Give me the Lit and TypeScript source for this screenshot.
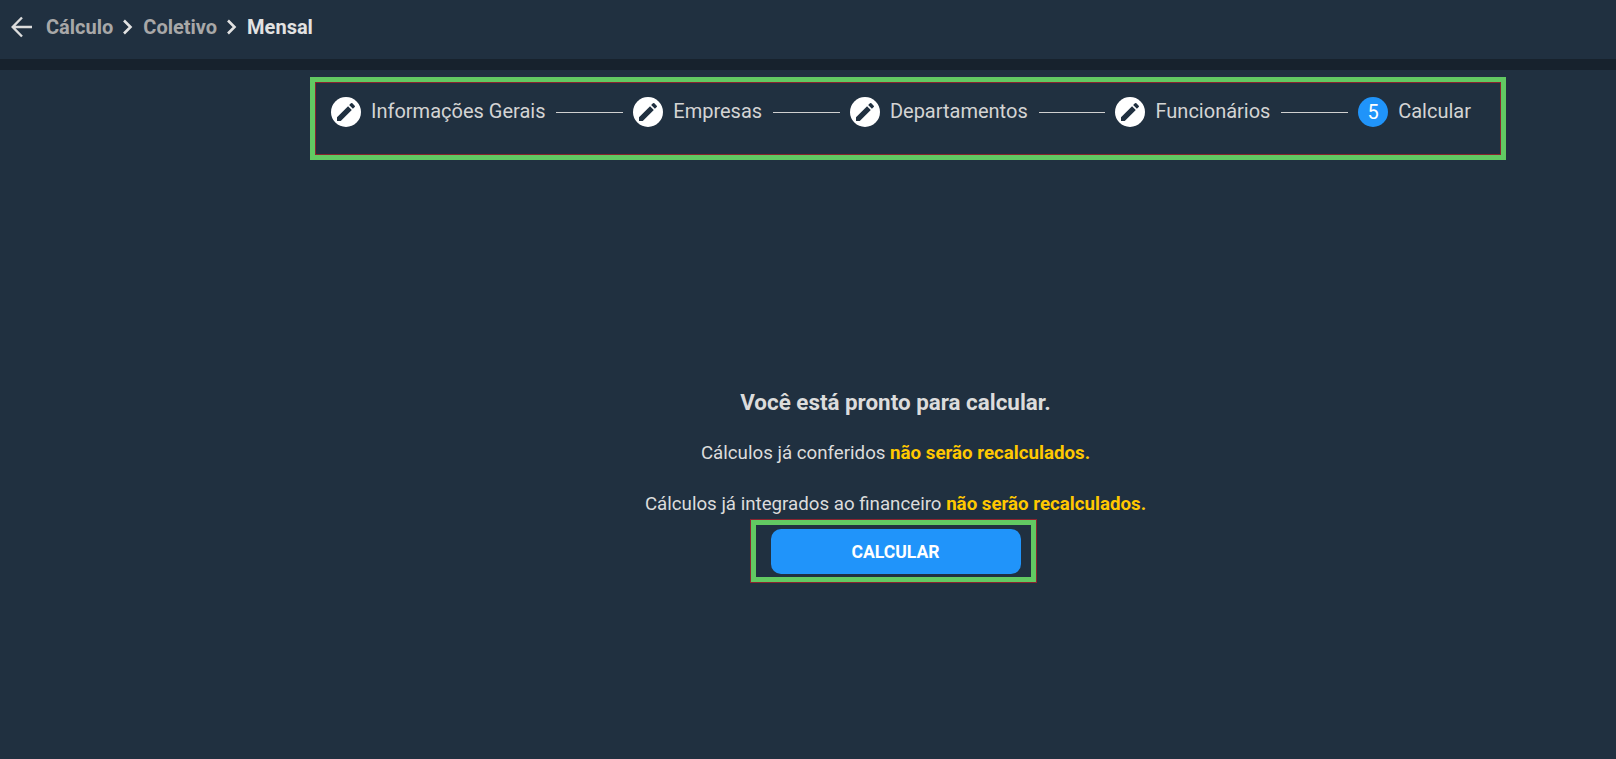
import { LitElement, html, css, svg } from "lit";
import { customElement } from "lit/decorators.js";

const pencil = svg`<path d="M3 17.25V21h3.75L17.81 9.94l-3.75-3.75L3 17.25zM20.71 7.04a1 1 0 0 0 0-1.41l-2.34-2.34a1 1 0 0 0-1.41 0l-1.83 1.83 3.75 3.75 1.83-1.83z"/>`;

@customElement("app-root")
export class AppRoot extends LitElement {
  static styles = css`
    :host { display: block; height: 759px; background: #203040; color: #dcdcdc; font-family: Roboto, "Liberation Sans", sans-serif; overflow: hidden; }
    .header { height: 59px; display: flex; align-items: center; padding: 0 0 5px 11px; box-sizing: border-box; font-size: 20px; font-weight: 700; }
    .back { width: 21px; height: 22px; margin-right: 14px; fill: none; stroke: #dcdcdc; stroke-width: 2.4; }
    .crumb { color: #a8a8a8; }
    .crumb.current { color: #e2e2e2; }
    .chev { width: 12px; height: 16px; margin: 0 9px; fill: none; stroke: #e2e2e2; stroke-width: 2.6; }
    .strip { height: 11px; background: #17222d; }
    .stepper-wrap { padding: 7px 110px 0 310px; }
    .stepper { height: 83px; box-sizing: border-box; border: 5px solid #62c962; outline: 1px solid #8a2430; outline-offset: -6px; padding: 15px 30px 0 16px; display: flex; align-items: flex-start; font-size: 20px; color: #d4d4d4; }
    .step { display: flex; align-items: center; height: 30px; line-height: 28px; }
    .label { margin-top: -3px; }
    .icon { width: 30px; height: 30px; border-radius: 50%; background: #fff; display: flex; align-items: center; justify-content: center; margin-right: 10px; flex: none; }
    .icon svg { width: 24px; height: 24px; fill: #203040; }
    .icon.num { background: #2094fa; color: #fff; font-size: 20px; }
    .line { flex: 1; height: 1px; background: #d0d0d0; margin: 15px 10px 0 11px; }
    .main { display: flex; flex-direction: column; align-items: center; margin-top: 229px; padding-left: 175px; font-size: 18.72px; }
    h1 { margin: 0; font-size: 22.4px; font-weight: 700; line-height: 26px; color: #dcdcdc; }
    p { margin: 0; line-height: 22px; color: #dcdcdc; }
    .p1 { margin-top: 27px; }
    .p2 { margin-top: 29px; }
    b { color: #ffc800; font-weight: 700; }
    .btn-box { margin: 5px 4px 0 0; width: 285px; height: 62px; box-sizing: border-box; border: 5px solid #62c962; outline: 1px solid #8a2430; display: flex; align-items: center; justify-content: center; }
    button { width: 250px; height: 45px; margin-left: 4px; padding: 1px 0 0; border: 0; border-radius: 10px; background: #2094fa; color: #fff; font: 700 17.6px Roboto, "Liberation Sans", sans-serif; }
  `;

  render() {
    const steps = ["Informações Gerais", "Empresas", "Departamentos", "Funcionários"];
    return html`
      <div class="header">
        <svg class="back" viewBox="0 0 21 22"><path d="M21 11H2M11 1.5 1.7 11l9.3 9.5"/></svg>
        <span class="crumb">Cálculo</span>
        <svg class="chev" viewBox="0 0 12 16"><path d="M2 1.5l6.5 6.5L2 14.5"/></svg>
        <span class="crumb">Coletivo</span>
        <svg class="chev" viewBox="0 0 12 16"><path d="M2 1.5l6.5 6.5L2 14.5"/></svg>
        <span class="crumb current">Mensal</span>
      </div>
      <div class="strip"></div>
      <div class="stepper-wrap">
        <div class="stepper">
          ${steps.map(s => html`
            <div class="step"><span class="icon"><svg viewBox="0 0 24 24">${pencil}</svg></span><span class="label">${s}</span></div>
            <div class="line"></div>`)}
          <div class="step"><span class="icon num">5</span><span class="label">Calcular</span></div>
        </div>
      </div>
      <div class="main">
        <h1>Você está pronto para calcular.</h1>
        <p class="p1">Cálculos já conferidos <b>não serão recalculados.</b></p>
        <p class="p2">Cálculos já integrados ao financeiro <b>não serão recalculados.</b></p>
        <div class="btn-box"><button>CALCULAR</button></div>
      </div>
    `;
  }
}
